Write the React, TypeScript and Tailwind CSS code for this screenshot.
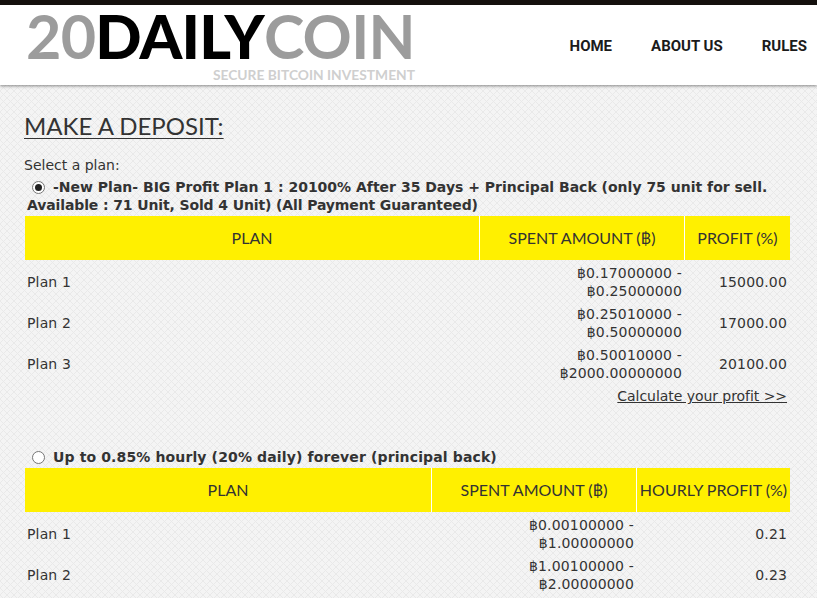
const pattern =
  "bg-[#f4f4f4] bg-[linear-gradient(45deg,transparent_44%,#e9e9e9_44%,#e9e9e9_56%,transparent_56%),linear-gradient(-45deg,transparent_44%,#e9e9e9_44%,#e9e9e9_56%,transparent_56%)] bg-size-[7px_7px]";

type Row = { name: string; from: string; to: string; profit: string };

const plan1: Row[] = [
  { name: "Plan 1", from: "฿0.17000000", to: "฿0.25000000", profit: "15000.00" },
  { name: "Plan 2", from: "฿0.25010000", to: "฿0.50000000", profit: "17000.00" },
  { name: "Plan 3", from: "฿0.50010000", to: "฿2000.00000000", profit: "20100.00" },
];

const plan2: Row[] = [
  { name: "Plan 1", from: "฿0.00100000", to: "฿1.00000000", profit: "0.21" },
  { name: "Plan 2", from: "฿1.00100000", to: "฿2.00000000", profit: "0.23" },
];

function Radio({ checked }: { checked?: boolean }) {
  return (
    <span className="inline-flex w-[13px] h-[13px] rounded-full border border-[#767676] bg-white items-center justify-center shrink-0">
      {checked && <span className="w-[7px] h-[7px] rounded-full bg-[#222]" />}
    </span>
  );
}

function PlanTable({ rows, cols, profitLabel }: { rows: Row[]; cols: number[]; profitLabel: string }) {
  return (
    <table className="w-[765px] table-fixed border-separate border-spacing-0 ml-[25px]">
      <colgroup>
        {cols.map((w, i) => (
          <col key={i} style={{ width: w }} />
        ))}
      </colgroup>
      <thead>
        <tr className="bg-[#fff000] h-[44px] font-['Lato',sans-serif] text-[16px] font-normal text-[#333]">
          <th className="font-normal">PLAN</th>
          <th className="font-normal border-l border-l-white">SPENT AMOUNT (฿)</th>
          <th className="font-normal border-l border-l-white whitespace-nowrap">{profitLabel}</th>
        </tr>
      </thead>
      <tbody>
        {rows.map((r) => (
          <tr key={r.name} className="h-[41px] text-[14px] leading-[18px] tracking-[0.15px] text-[#333]">
            <td className="px-[2px] pt-[2px]">{r.name}</td>
            <td className="pl-[3px] pr-[2px] pt-[2px] text-right">
              {r.from} -<br />
              {r.to}
            </td>
            <td className="px-[3px] pt-[2px] text-right">{r.profit}</td>
          </tr>
        ))}
      </tbody>
    </table>
  );
}

export default function App() {
  return (
    <div className={`h-[598px] overflow-hidden font-['DejaVu_Sans',sans-serif] ${pattern}`}>
      {/* HEADER */}
      <header className="h-[85px] bg-white border-t-[5px] border-t-[#14100d] shadow-[0_1px_3px_rgba(0,0,0,0.45)] flex justify-between">
        <div className="ml-[26px] w-[389px] pt-[1px]">
          <div className="font-['Lato',sans-serif] font-bold text-[61px] leading-[60px] tracking-[-0.75px] whitespace-nowrap text-[#9c9c9c]">
            20<span className="text-black font-black">DAILY</span>
            <span className="font-bold">COIN</span>
          </div>
          <div className="text-right font-['Lato',sans-serif] font-bold text-[13.8px] leading-[17px] text-[#cfcfcf] whitespace-nowrap">
            SECURE BITCOIN INVESTMENT
          </div>
        </div>
        <nav className="flex gap-[39px] pt-[32px] pr-[10px] font-['Roboto',sans-serif] font-bold text-[15px] leading-[18px] text-[#1b1b1b]">
          <span>HOME</span>
          <span>ABOUT US</span>
          <span>RULES</span>
        </nav>
      </header>

      {/* DEPOSIT FORM */}
      <main className="pt-[26px]">
        <h2 className="ml-[24px] font-['Lato',sans-serif] text-[24px] leading-[30px] text-[#333] underline underline-offset-[3px] decoration-1">
          MAKE A DEPOSIT:
        </h2>
        <p className="ml-[24px] mt-[15px] text-[14px] leading-[18px] text-[#333]">Select a plan:</p>
        <div className="ml-[27px] mt-[4px] w-[770px] font-bold text-[14px] leading-[18px] text-[#333]">
          <div className="flex items-center">
            <span className="ml-[5px] mr-[8px] flex"><Radio checked /></span>
            <span className="whitespace-nowrap">-New Plan- BIG Profit Plan 1 : 20100% After 35 Days + Principal Back (only 75 unit for sell.</span>
          </div>
          <div className="whitespace-nowrap tracking-[-0.12px]">Available : 71 Unit, Sold 4 Unit) (All Payment Guaranteed)</div>
        </div>
        <div className="mt-[2px]">
          <PlanTable rows={plan1} cols={[454, 205, 106]} profitLabel="PROFIT (%)" />
        </div>
        <div className="w-[787px] text-right mt-[4px] text-[14px] leading-[18px] text-[#333] underline tracking-[-0.05px]">
          Calculate your profit &gt;&gt;
        </div>

        <div className="ml-[32px] mt-[43px] flex items-center font-bold text-[14px] leading-[18px] text-[#333]">
          <span className="mr-[8px] flex"><Radio /></span>
          <span className="whitespace-nowrap tracking-[0.13px]">Up to 0.85% hourly (20% daily) forever (principal back)</span>
        </div>
        <div className="mt-[2px]">
          <PlanTable rows={plan2} cols={[406, 205, 154]} profitLabel="HOURLY PROFIT (%)" />
        </div>
      </main>
    </div>
  );
}
